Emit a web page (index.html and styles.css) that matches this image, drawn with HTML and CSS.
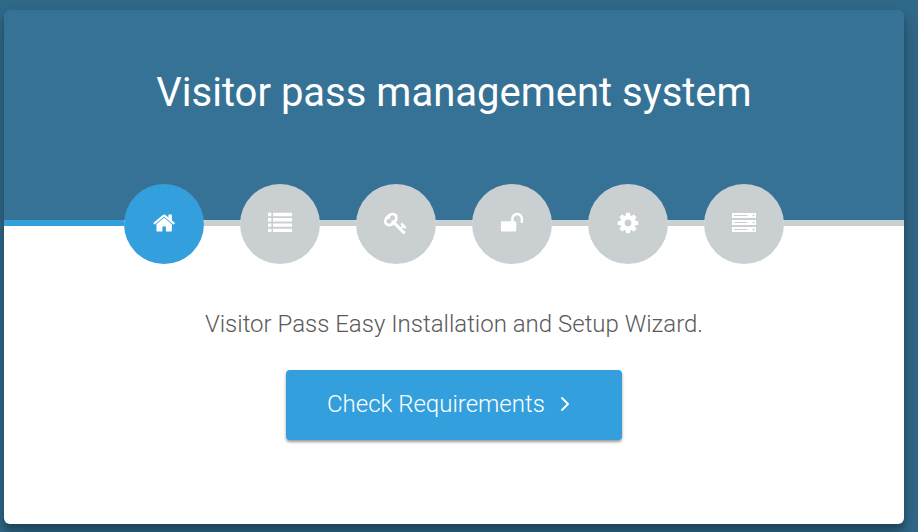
FILE: index.html
```html
<!DOCTYPE html>
<html lang="en">
<head>
<meta charset="utf-8">
<title>Visitor pass management system</title>
<link rel="stylesheet" href="styles.css">
</head>
<body>
<main class="card">
  <header class="header"><h1 class="title">Visitor pass management system</h1></header>
  <ol class="steps">
    <li class="line line-edge line-active"></li>
    <li class="step step-active"><svg viewBox="0 0 1664 1792" width="22.3" height="24"><path d="M1408 992v480q0 26-19 45t-45 19H960v-384H704v384H320q-26 0-45-19t-19-45V992q0-1 .5-3t.5-3l575-474 575 474q1 2 1 6zm223-69l-62 74q-8 9-21 11h-3q-13 0-21-7L832 424 140 1001q-12 8-24 7-13-2-21-11l-62-74q-8-10-7-23.500t11-21.500l719-599q32-26 76-26t76 26l244 204V288q0-14 9-23t23-9h192q14 0 23 9t9 23v408l219 182q10 8 11 21.500t-7 23.500z"/></svg></li>
    <li class="line"></li>
    <li class="step"><svg viewBox="0 0 24 24" width="24" height="24"><path d="M0 1.800h3.400v3.400H0zM5 1.800h19v3.400H5zM0 7.100h3.400v3.400H0zM5 7.100h19v3.400H5zM0 12.400h3.400v3.400H0zM5 12.400h19v3.400H5zM0 17.700h3.400v3.300H0zM5 17.700h19v3.300H5z"/></svg></li>
    <li class="line"></li>
    <li class="step"><svg viewBox="0 0 1792 1792" width="24" height="24"><path d="M832 512q0-80-56-136t-136-56-136 56-56 136q0 42 19 83-41-19-83-19-80 0-136 56t-56 136 56 136 136 56 136-56 56-136q0-42-19-83 41 19 83 19 80 0 136-56t56-136zm851 704q0 17-49 66t-66 49q-9 0-28.500-16t-36.500-33-38.500-40-24.500-26l-96 96 220 220q28 28 28 68 0 42-39 81t-81 39q-40 0-68-28l-671-671q-176 131-365 131-163 0-265.500-102.500t-102.500-265.500q0-160 95-313t248-248 313-95q163 0 265.500 102.500t102.500 265.500q0 189-131 365l355 355 96-96q-3-3-26-24.500t-40-38.500-33-36.500-16-28.500q0-17 49-66t66-49q13 0 23 10 6 6 46 44.500t82 79.500 86.500 86 73 78 28.500 41z"/></svg></li>
    <li class="line"></li>
    <li class="step"><svg viewBox="0 0 1792 1792" width="24" height="24"><path d="M1728 576v256q0 26-19 45t-45 19h-64q-26 0-45-19t-19-45V576q0-106-75-181t-181-75-181 75-75 181v192h96q40 0 68 28t28 68v576q0 40-28 68t-68 28H160q-40 0-68-28t-28-68V864q0-40 28-68t68-28h672V576q0-185 131.500-316.500T1280 128t316.500 131.500T1728 576z"/></svg></li>
    <li class="line"></li>
    <li class="step"><svg viewBox="0 0 1792 1792" width="24" height="24"><path d="M1152 896q0-106-75-181t-181-75-181 75-75 181 75 181 181 75 181-75 75-181zm512-109v222q0 12-8 23t-20 13l-185 28q-19 54-39 91 35 50 107 138 10 12 10 25t-9 23q-27 37-99 108t-94 71q-12 0-26-9l-138-108q-44 23-91 38-16 136-29 186-7 28-36 28H785q-14 0-24.500-8.500T749 1634l-28-184q-49-16-90-37l-141 107q-10 9-25 9-14 0-25-11-126-114-165-168-7-10-7-23 0-12 8-23 15-21 51-66.500t54-70.500q-27-50-41-99l-183-27q-13-2-21-12.500t-8-23.500V783q0-12 8-23t19-13l186-28q14-46 39-92-40-57-107-138-10-12-10-24 0-10 9-23 26-36 98.500-107.500T465 263q13 0 26 10l138 107q44-23 91-38 16-136 29-186 7-28 36-28h222q14 0 24.500 8.500T1043 158l28 184q49 16 90 37l142-107q9-9 24-9 13 0 25 10 129 119 165 170 7 8 7 22 0 12-8 23-15 21-51 66.500t-54 70.500q26 50 41 98l183 28q13 2 21 12.500t8 23.500z"/></svg></li>
    <li class="line"></li>
    <li class="step"><svg viewBox="0 0 24 24" width="24" height="24"><path fill-rule="evenodd" d="M0 1.900h24v5.100H0zM2 3.900v1.200h13.500V3.900zM0 8.900h24v5.100H0zM2 10.900v1.200h13.500v-1.200zM0 15.900h24v5.100H0zM2 17.900v1.200h13.500v-1.200z"/><g class="lights"><circle cx="21.500" cy="4.500" r="1"/><circle cx="21.500" cy="11.500" r="1"/><circle cx="21.500" cy="18.500" r="1"/></g></svg></li>
    <li class="line line-edge"></li>
  </ol>
  <section class="content">
    <p class="intro">Visitor Pass Easy Installation and Setup Wizard.</p>
    <a class="button"><span>Check Requirements</span><svg viewBox="0 0 10 16" width="10" height="16"><path d="M1.500 1.500L8 8l-6.500 6.500" fill="none" stroke="#fff" stroke-width="1.900"/></svg></a>
  </section>
</main>
</body>
</html>
```
FILE: styles.css
```css
* { box-sizing: border-box; }
body { margin: 0; height: 532px; overflow: hidden; padding: 10px 14px 8px 4px; background: #306888; font-family: Roboto, sans-serif; }
.card { height: 514px; background: linear-gradient(#367296 210px, #fff 210px); border-radius: 6px; box-shadow: 0 10px 20px rgba(0,0,0,.19), 0 6px 6px rgba(0,0,0,.23); }
.header { height: 210px; display: flex; justify-content: center; padding-top: 59px; }
.title { margin: 0; color: #fff; font-weight: 400; font-size: 40px; line-height: 48px; }
.steps { list-style: none; margin: -36px 0 0; padding: 0; display: flex; align-items: flex-start; height: 80px; }
.line { flex: 0 0 36px; height: 6px; margin-top: 36px; background: #cacfd2; }
.line-edge { flex: 1; }
.step { width: 80px; height: 80px; border-radius: 50%; background: #cacfd2; display: flex; align-items: center; justify-content: center; fill: #fff; padding-bottom: 2px; }
.step-active, .line-active { background: #349fdd; }
.lights { fill: #cacfd2; }
.content { display: flex; flex-direction: column; align-items: center; }
.intro { margin: 46px 0 32px; font-size: 24px; line-height: 28px; font-weight: 300; color: #5a5a5a; }
.button { width: 336px; height: 70px; background: #349fdd; color: #fff; border-radius: 4px; font-size: 24px; font-weight: 300; line-height: 28px; display: flex; align-items: center; padding: 0 0 2px 41px; gap: 15px; box-shadow: 0 2px 3px rgba(0,0,0,.4); }
```
